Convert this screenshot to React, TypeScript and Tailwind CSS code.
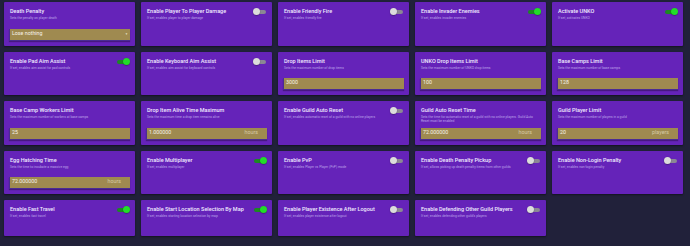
import React from 'react'

type Setting = {
  title: string
  desc: string
  kind: 'toggle' | 'number' | 'select'
  on?: boolean
  value?: string
  unit?: string
}

const rows: (Setting | null)[][] = [
  [
    { title: 'Death Penalty', desc: 'Sets the penalty on player death', kind: 'select', value: 'Lose nothing' },
    { title: 'Enable Player To Player Damage', desc: 'If set, enables player to player damage', kind: 'toggle', on: false },
    { title: 'Enable Friendly Fire', desc: 'If set, enables friendly fire', kind: 'toggle', on: false },
    { title: 'Enable Invader Enemies', desc: 'If set, enables invader enemies', kind: 'toggle', on: true },
    { title: 'Activate UNKO', desc: 'If set, activates UNKO', kind: 'toggle', on: true },
  ],
  [
    { title: 'Enable Pad Aim Assist', desc: 'If set, enables aim assist for pad controls', kind: 'toggle', on: true },
    { title: 'Enable Keyboard Aim Assist', desc: 'If set, enables aim assist for keyboard controls', kind: 'toggle', on: false },
    { title: 'Drop Items Limit', desc: 'Sets the maximum number of drop items', kind: 'number', value: '3000' },
    { title: 'UNKO Drop Items Limit', desc: 'Sets the maximum number of UNKO drop items', kind: 'number', value: '100' },
    { title: 'Base Camps Limit', desc: 'Sets the maximum number of base camps', kind: 'number', value: '128' },
  ],
  [
    { title: 'Base Camp Workers Limit', desc: 'Sets the maximum number of workers at base camps', kind: 'number', value: '25' },
    { title: 'Drop Item Alive Time Maximum', desc: 'Sets the maximum time a drop item remains alive', kind: 'number', value: '1.000000', unit: 'hours' },
    { title: 'Enable Guild Auto Reset', desc: 'If set, enables automatic reset of a guild with no online players', kind: 'toggle', on: false },
    { title: 'Guild Auto Reset Time', desc: 'Sets the time for automatic reset of a guild with no online players. Guild Auto Reset must be enabled', kind: 'number', value: '72.000000', unit: 'hours' },
    { title: 'Guild Player Limit', desc: 'Sets the maximum number of players in a guild', kind: 'number', value: '20', unit: 'players' },
  ],
  [
    { title: 'Egg Hatching Time', desc: 'Sets the time to incubate a massive egg', kind: 'number', value: '72.000000', unit: 'hours' },
    { title: 'Enable Multiplayer', desc: 'If set, enables multiplayer', kind: 'toggle', on: true },
    { title: 'Enable PvP', desc: 'If set, enables Player vs Player (PvP) mode', kind: 'toggle', on: false },
    { title: 'Enable Death Penalty Pickup', desc: 'If set, allows picking up death penalty items from other guilds', kind: 'toggle', on: false },
    { title: 'Enable Non-Login Penalty', desc: 'If set, enables non-login penalty', kind: 'toggle', on: false },
  ],
  [
    { title: 'Enable Fast Travel', desc: 'If set, enables fast travel', kind: 'toggle', on: true },
    { title: 'Enable Start Location Selection By Map', desc: 'If set, enables starting location selection by map', kind: 'toggle', on: true },
    { title: 'Enable Player Existence After Logout', desc: 'If set, enables player existence after logout', kind: 'toggle', on: false },
    { title: 'Enable Defending Other Guild Players', desc: "If set, enables defending other guild's players", kind: 'toggle', on: false },
    null,
  ],
]

function Toggle({ on }: { on: boolean }) {
  return (
    <div className="relative mt-[1px] h-[7px] w-[14px] shrink-0">
      <div
        className={
          on
            ? 'absolute left-[1px] top-[1.5px] h-[4px] w-[12px] rounded-full bg-[#1c8a22]'
            : 'absolute left-[1px] top-[1.5px] h-[4px] w-[12px] rounded-full bg-[#8b8794]'
        }
      />
      <div
        className={
          on
            ? 'absolute right-0 top-0 h-[7px] w-[7px] rounded-full bg-[#22dd2a] shadow-[0_0.5px_1px_rgba(0,0,0,0.5)]'
            : 'absolute left-0 top-0 h-[7px] w-[7px] rounded-full bg-[#dcdcdc] shadow-[0_0.5px_1px_rgba(0,0,0,0.5)]'
        }
      />
    </div>
  )
}

function Card({ s }: { s: Setting }) {
  return (
    <div className="flex min-h-[36px] flex-col rounded-[1px] bg-[#6523b9] px-[5px] pb-[5px] pt-[5px] shadow-[0_1px_2px_rgba(0,0,0,0.45)]">
      <div className="flex items-start justify-between gap-[3px]">
        <div className="min-w-0">
          <div className="whitespace-nowrap pl-[1px] pt-[1px] text-[5.5px] font-medium leading-[7.5px] text-[#f0eaff]">
            {s.title}
          </div>
          <div className="pl-[1px] pt-[0.5px] text-[3.3px] leading-[4px] text-[#bea6ea]">{s.desc}</div>
        </div>
        {s.kind === 'toggle' && <Toggle on={!!s.on} />}
      </div>
      {s.kind !== 'toggle' && (
        <div className="mt-auto flex h-[12.5px] items-center justify-between border-b-[1.5px] border-l-[1px] border-[#4a2c93] bg-[#9f8a50] px-[2px] text-[5.3px] text-[#f6f2e8] shadow-[0_1px_1px_rgba(0,0,0,0.3)]">
          <span>{s.value}</span>
          {s.unit && <span className="pr-[7px] text-[#d6cba6]">{s.unit}</span>}
          {s.kind === 'select' && <span className="text-[3px] text-[#e8e0c8]">▼</span>}
        </div>
      )}
    </div>
  )
}

export default function App() {
  return (
    <div
      className="h-[246px] w-[690px] overflow-hidden bg-[#21213a] pl-[4px] pr-[7px] pt-[2px]"
      style={{ fontFamily: 'Roboto, "Noto Sans", sans-serif' }}
    >
      <div className="grid grid-cols-5 gap-[6px]" style={{ gridTemplateRows: '44px 43px 44px 43px 36px' }}>
        {rows.flat().map((s, i) => (s ? <Card key={i} s={s} /> : <div key={i} />))}
      </div>
    </div>
  )
}
